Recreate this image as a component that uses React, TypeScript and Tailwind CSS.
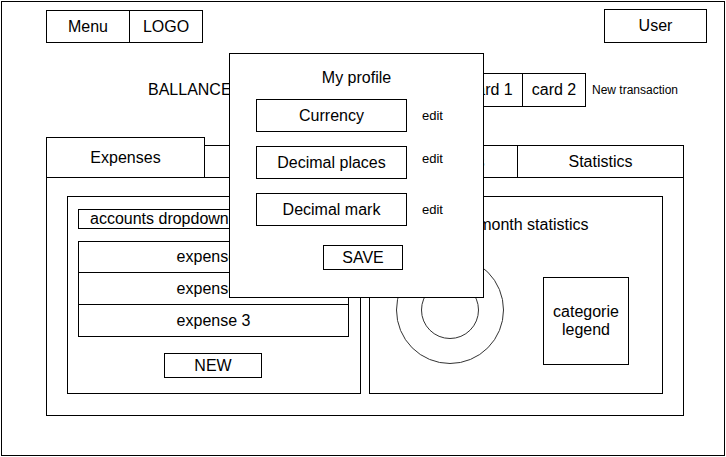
import React from 'react';

const tabs = [
  { label: 'Expenses', active: true, width: 'w-[159px]' },
  { label: 'Incomes', active: false, width: 'w-[156px]' },
  { label: 'Transactions', active: false, width: 'w-[157px]' },
  { label: 'Statistics', active: false, width: 'w-[166px]' },
];

const profileFields = [
  { label: 'Currency', editTop: 'mt-[7px]' },
  { label: 'Decimal places', editTop: 'mt-[3px]' },
  { label: 'Decimal mark', editTop: 'mt-[7px]' },
];

function Donut() {
  return (
    <svg width="110" height="110" viewBox="0 0 110 110" className="shrink-0">
      <circle cx="55" cy="55" r="53.5" fill="none" stroke="#333" strokeWidth="1" />
      <circle cx="55" cy="55" r="28.5" fill="none" stroke="#333" strokeWidth="1" />
    </svg>
  );
}

function ProfileModal() {
  return (
    <div className="absolute left-[229px] top-[52px] w-[255px] h-[245px] bg-white border border-black flex flex-col">
      <div className="mt-[15px] text-center text-[16px] leading-[18px]">My profile</div>
      <div className="mt-[12px] flex flex-col gap-[14px]">
        {profileFields.map((f) => (
          <div key={f.label} className="flex items-start ml-[26px]">
            <div className="w-[151px] h-[33px] border border-black flex items-center justify-center text-[16px]">
              {f.label}
            </div>
            <span className={`ml-[15px] text-[13px] leading-[20px] ${f.editTop}`}>edit</span>
          </div>
        ))}
      </div>
      <div className="mt-[19px] ml-[93px] w-[80px] h-[25px] border border-black flex items-center justify-center text-[16px]">
        SAVE
      </div>
    </div>
  );
}

function ExpensesPanel() {
  return (
    <div className="w-[294px] h-[198px] border border-black flex flex-col">
      <div className="mt-[12px] ml-[10px] w-[271px] h-[20px] border border-black flex items-center pl-[11px] text-[16px] leading-[18px]">
        accounts dropdown
      </div>
      <div className="mt-[12px] ml-[10px] w-[271px] border border-black text-[16px]">
        <div className="h-[30px] flex items-center justify-center">expense 1</div>
        <div className="h-[32px] border-t border-black flex items-center justify-center">expense 2</div>
        <div className="h-[32px] border-t border-black flex items-center justify-center">expense 3</div>
      </div>
      <div className="mt-[16px] ml-[96px] w-[98px] h-[25px] border border-black flex items-center justify-center text-[16px]">
        NEW
      </div>
    </div>
  );
}

function StatisticsPanel() {
  return (
    <div className="w-[294px] h-[198px] border border-black flex flex-col">
      <div className="mt-[19px] text-center text-[16px] leading-[18px]">This month statistics</div>
      <div className="mt-[21px] ml-[25px] flex items-start">
        <Donut />
        <div className="ml-[38px] mt-[22px] w-[86px] h-[88px] border border-black flex items-center justify-center text-center text-[16px] leading-[18px]">
          categorie
          <br />
          legend
        </div>
      </div>
    </div>
  );
}

export default function App() {
  return (
    <div className="relative w-[726px] h-[457px] bg-white text-black font-['Liberation_Sans',Arial,sans-serif]">
      <div className="ml-px mt-px w-[724px] h-[455px] border border-black flex flex-col">
        {/* top bar */}
        <div className="flex items-start justify-between pt-[7px] pl-[44px] pr-[17px]">
          <div className="mt-px flex h-[33px] border border-black text-[16px]">
            <div className="w-[83px] border-r border-black flex items-center justify-center">Menu</div>
            <div className="w-[72px] flex items-center justify-center">LOGO</div>
          </div>
          <div className="w-[103px] h-[34px] border border-black flex items-center justify-center text-[16px]">
            User
          </div>
        </div>

        {/* balance + cards */}
        <div className="mt-[30px] h-[34px] flex items-center pl-[146px]">
          <span className="w-[310px] text-[16px]">BALLANCE</span>
          <div className="flex h-[34px] border border-black text-[16px]">
            <div className="w-[64px] border-r border-black flex items-center justify-center">card 1</div>
            <div className="w-[62px] flex items-center justify-center">card 2</div>
          </div>
          <span className="ml-[6px] text-[12px]">New transaction</span>
        </div>

        {/* tabs */}
        <div className="mt-[30px] ml-[44px] w-[638px]">
          <div className="flex items-end h-[41px]">
            {tabs.map((t) => (
              <div
                key={t.label}
                className={
                  t.active
                    ? `${t.width} h-[41px] border border-black flex items-center justify-center text-[16px]`
                    : `${t.width} h-[33px] border-y border-r border-black flex items-center justify-center text-[16px]`
                }
              >
                {t.label}
              </div>
            ))}
          </div>
          <div className="-mt-px h-[239px] border border-black flex gap-[8px] pt-[18px] pl-[20px]">
            <ExpensesPanel />
            <StatisticsPanel />
          </div>
        </div>
      </div>

      <ProfileModal />
    </div>
  );
}
